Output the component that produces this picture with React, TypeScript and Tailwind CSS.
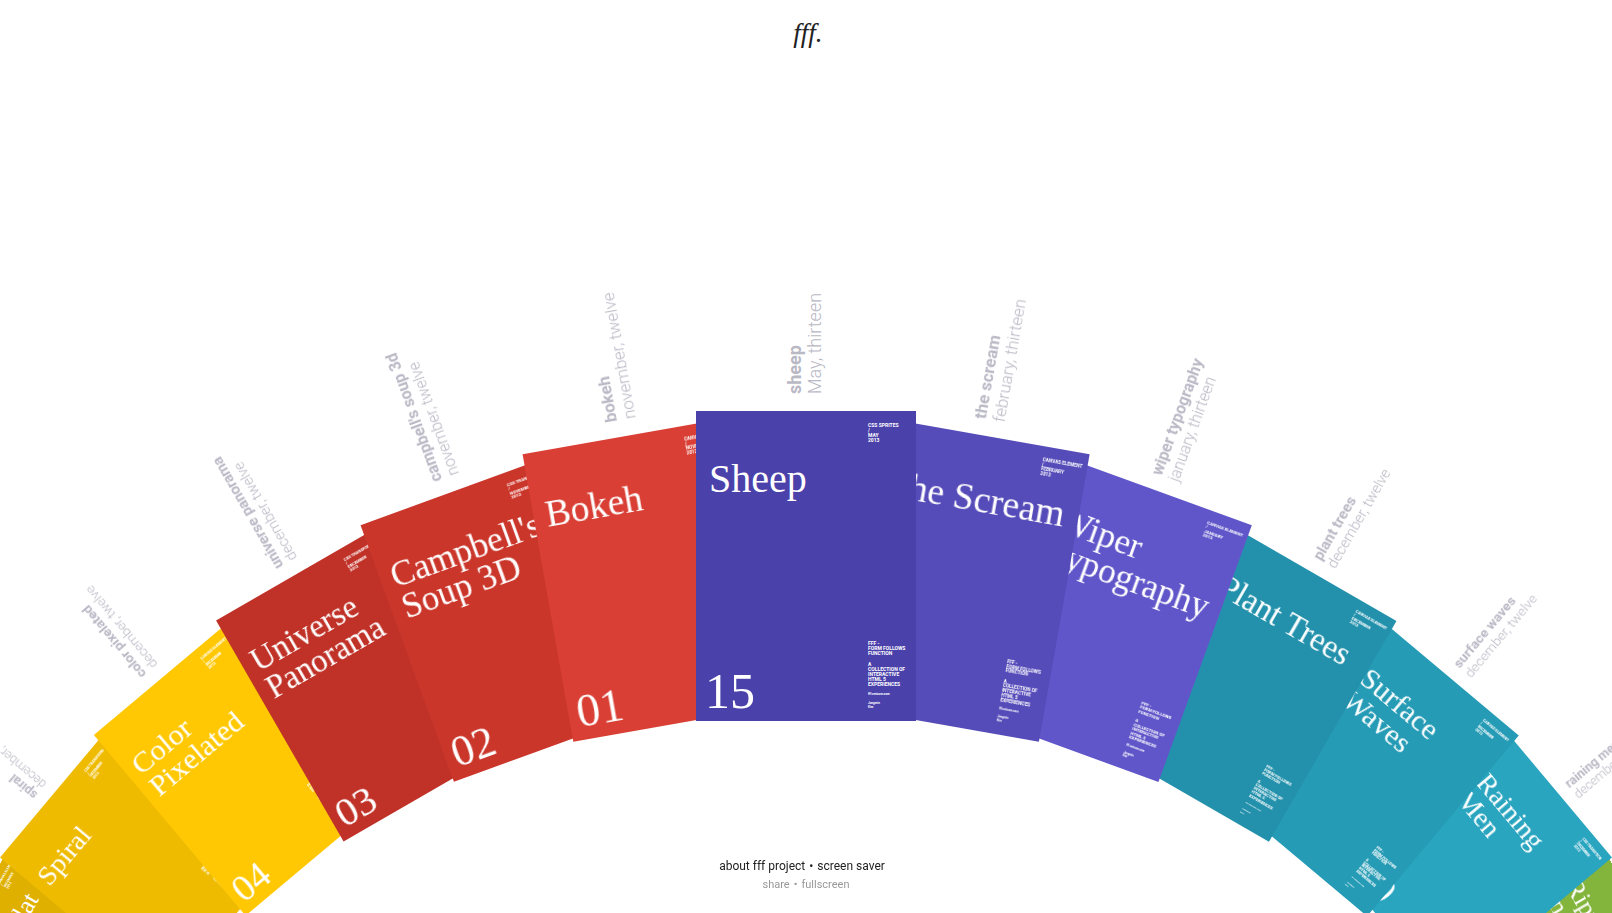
type Work = {
  slot: number;
  shift: number;
  color: string;
  title: string[];
  number: string;
  name: string;
  date: string;
  tech: string;
  month: string;
  year: string;
};

const works: Work[] = [
  { slot: -6, shift: 61, color: "bg-[#e0b000]", title: ["Circle Flat"], number: "06", name: "circle flat", date: "december, twelve", tech: "CANVAS ELEMENT", month: "DECEMBER", year: "2012" },
  { slot: -5, shift: 25, color: "bg-[#efbb00]", title: ["Spiral"], number: "05", name: "spiral", date: "december, twelve", tech: "CSS TRANSFORM", month: "DECEMBER", year: "2012" },
  { slot: -4, shift: 8, color: "bg-[#ffc803]", title: ["Color", "Pixelated"], number: "04", name: "color pixelated", date: "december, twelve", tech: "CANVAS ELEMENT", month: "DECEMBER", year: "2012" },
  { slot: -3, shift: 2, color: "bg-[#c03127]", title: ["Universe", "Panorama"], number: "03", name: "universe panorama", date: "december, twelve", tech: "CSS TRANSFORM", month: "DECEMBER", year: "2012" },
  { slot: -2, shift: 0, color: "bg-[#cb362b]", title: ["Campbell's", "Soup 3D"], number: "02", name: "campbell's soup 3d", date: "november, twelve", tech: "CSS TRANSFORM", month: "NOVEMBER", year: "2012" },
  { slot: -1, shift: 0, color: "bg-[#d93f34]", title: ["Bokeh"], number: "01", name: "bokeh", date: "november, twelve", tech: "CANVAS ELEMENT", month: "NOVEMBER", year: "2012" },
  { slot: 0, shift: 0, color: "bg-[#4b41ab]", title: ["Sheep"], number: "15", name: "sheep", date: "May, thirteen", tech: "CSS SPRITES", month: "MAY", year: "2013" },
  { slot: 1, shift: 0, color: "bg-[#554bb9]", title: ["The Scream"], number: "14", name: "the scream", date: "february, thirteen", tech: "CANVAS ELEMENT", month: "FEBRUARY", year: "2013" },
  { slot: 2, shift: 0, color: "bg-[#6056c9]", title: ["Wiper", "Typography"], number: "13", name: "wiper typography", date: "january, thirteen", tech: "CANVAS ELEMENT", month: "JANUARY", year: "2013" },
  { slot: 3, shift: -2, color: "bg-[#2391ac]", title: ["Plant Trees"], number: "12", name: "plant trees", date: "december, twelve", tech: "CANVAS ELEMENT", month: "DECEMBER", year: "2012" },
  { slot: 4, shift: -8, color: "bg-[#259bb5]", title: ["Surface", "Waves"], number: "11", name: "surface waves", date: "december, twelve", tech: "CANVAS ELEMENT", month: "DECEMBER", year: "2012" },
  { slot: 5, shift: -25, color: "bg-[#29a5c0]", title: ["Raining", "Men"], number: "10", name: "raining men", date: "december, twelve", tech: "CSS TRANSITION", month: "DECEMBER", year: "2012" },
  { slot: 6, shift: -61, color: "bg-[#83b43c]", title: ["Ripple", "In"], number: "09", name: "ripple in", date: "december, twelve", tech: "CANVAS ELEMENT", month: "DECEMBER", year: "2012" },
];

function Poster({ work }: { work: Work }) {
  const distance = Math.abs(work.slot);
  return (
    <li
      className="absolute top-0 left-1/2 h-[310px] w-[220px] origin-[110px_1055px]"
      style={{
        transform: `translateX(-50%) rotate(${work.slot * 10}deg) translateX(${work.shift}px)`,
        zIndex: 20 - distance,
      }}
    >
      <a href={`#work-${work.number}`} className="relative block h-full" style={{ transform: `scale(${1 - distance * 0.06})` }}>
        <span className="absolute -top-[17px] left-[109px] origin-left -translate-y-1/2 -rotate-90 text-lg leading-5 font-light whitespace-nowrap text-[#b9b8c5]">
          <strong className="block font-bold">{work.name}</strong>
          <span className="block">{work.date}</span>
        </span>
        <article className={`relative h-full overflow-hidden text-white ${work.color}`}>
          <h2 className="pt-[49px] pl-[13px] font-['Liberation_Serif',serif] text-[40px] leading-[37px] whitespace-nowrap">
            {work.title.map((line) => (
              <span key={line} className="block">{line}</span>
            ))}
          </h2>
          <p className="absolute bottom-1 left-[9px] font-['Liberation_Serif',serif] text-[50px] leading-[52px]">{work.number}</p>
          <p className="absolute top-3 left-[172px] text-[5px] leading-[5px] font-bold whitespace-nowrap">
            {work.tech}
            <br />/<br />
            {work.month}
            <br />
            {work.year}
          </p>
          <div className="absolute bottom-3 left-[172px] text-[5px] leading-[5px] font-bold whitespace-nowrap">
            <p>
              FFF -<br />
              FORM FOLLOWS
              <br />
              FUNCTION
            </p>
            <p className="mt-[6px]">
              A<br />
              COLLECTION OF
              <br />
              INTERACTIVE
              <br />
              HTML 5<br />
              EXPERIENCES
            </p>
            <p className="mt-[5px] text-[3px] leading-[4px]">fff.cmiscm.com</p>
            <p className="mt-[5px] text-[3px] leading-[4px]">
              Jongmin
              <br />
              Kim
            </p>
          </div>
        </article>
      </a>
    </li>
  );
}

export default function App() {
  return (
    <div className="relative flex h-screen flex-col overflow-hidden bg-white font-['Roboto',sans-serif]">
      <header className="flex justify-center pt-4 pl-1">
        <h1 className="font-['Liberation_Serif',serif] text-[27px] leading-[34px] text-[#222] italic">
          <a href="#home">fff.</a>
        </h1>
      </header>
      <ul className="relative mt-[361px] flex-1">
        {works.map((work) => (
          <Poster key={work.slot} work={work} />
        ))}
      </ul>
      <footer className="relative z-30 flex flex-col items-center pb-[19px]">
        <nav className="flex gap-1 pr-2 text-xs leading-[18px] text-[#222]">
          <a href="#about">about fff project</a>
          <span>•</span>
          <a href="#screen-saver">screen saver</a>
        </nav>
        <nav className="flex gap-1 text-[11px] leading-[19px] text-[#999]">
          <a href="#share">share</a>
          <span>•</span>
          <a href="#fullscreen">fullscreen</a>
        </nav>
      </footer>
    </div>
  );
}
